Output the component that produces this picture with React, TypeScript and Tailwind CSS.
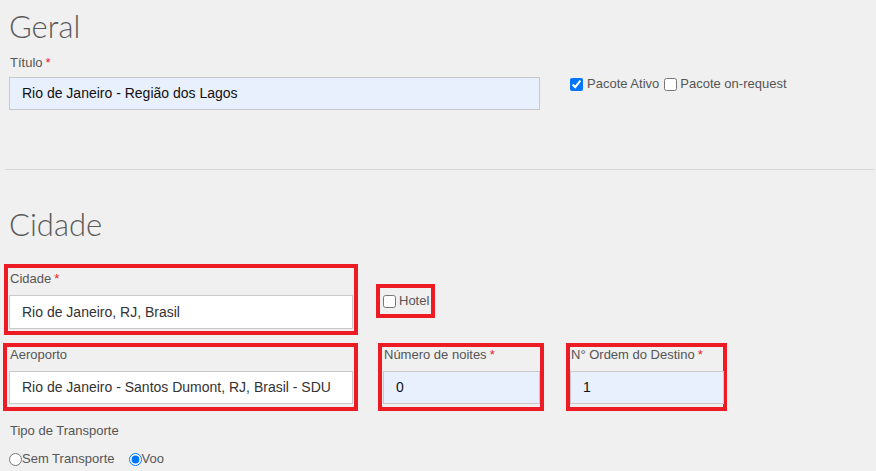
import React from "react";

const Req = () => <span className="text-[#e8212b] ml-[3px]">*</span>;

export default function App() {
  return (
    <div className="min-h-screen w-[876px] bg-[#f0f0f0] font-['Liberation_Sans',Arial,sans-serif] text-[#555] overflow-hidden">
      {/* Geral */}
      <h1 className="pt-[6px] pl-[9px] h-[46px] font-['Lato',sans-serif] font-light text-[31px] leading-[40px] text-[#5a5a5a]">
        Geral
      </h1>
      <div className="mt-[8px] flex items-start">
        <div className="ml-[9px] w-[531px] flex flex-col">
          <label className="pl-[1px] text-[13px] leading-[18px]">
            Título
            <Req />
          </label>
          <div className="mt-[5px] h-[33px] border border-[#c8c8c8] bg-[#e8f0fe] pl-[12px] flex items-center text-[14px] text-[#111]">
            Rio de Janeiro - Região dos Lagos
          </div>
        </div>
        <div className="ml-[30px] mt-[21px] flex items-center text-[13px] leading-[18px]">
          <input type="checkbox" defaultChecked className="m-0 w-[13px] h-[13px] accent-[#0075ff]" />
          <span className="ml-[4px]">Pacote Ativo</span>
          <input type="checkbox" className="m-0 ml-[5px] w-[13px] h-[13px]" />
          <span className="ml-[3px]">Pacote on-request</span>
        </div>
      </div>

      <div className="mt-[59px] ml-[5px] mr-[1px] border-t border-[#d8d8d8]" />

      {/* Cidade */}
      <h2 className="mt-[34px] pl-[9px] h-[40px] font-['Lato',sans-serif] font-light text-[31px] leading-[40px] text-[#5a5a5a]">
        Cidade
      </h2>

      <div className="mt-[20px] flex items-start">
        <div className="ml-[4px] w-[354px] border-4 border-[#ed1c24] pt-[3px] pb-[2px] pl-[1px] pr-[1px] flex flex-col">
          <label className="pl-[1px] text-[13px] leading-[16px]">
            Cidade
            <Req />
          </label>
          <div className="mt-[8px] h-[34px] border border-[#c8c8c8] bg-white pl-[12px] flex items-center text-[14px] text-[#333]">
            Rio de Janeiro, RJ, Brasil
          </div>
        </div>
        <div className="ml-[18px] mt-[20px] w-[59px] h-[34px] border-4 border-[#ed1c24] pl-[3px] flex items-center text-[13px]">
          <input type="checkbox" className="m-0 w-[13px] h-[13px]" />
          <span className="ml-[3px]">Hotel</span>
        </div>
      </div>

      <div className="mt-[8px] flex items-start">
        <div className="ml-[3px] w-[355px] border-4 border-[#ed1c24] pb-[3px] pl-[2px] pr-[1px] flex flex-col">
          <label className="pl-[1px] text-[13px] leading-[16px]">Aeroporto</label>
          <div className="mt-[8px] h-[33px] border border-[#c8c8c8] bg-white pl-[12px] flex items-center text-[14px] text-[#333]">
            Rio de Janeiro - Santos Dumont, RJ, Brasil - SDU
          </div>
        </div>
        <div className="ml-[20px] w-[166px] border-4 border-[#ed1c24] pb-[3px] pl-[1px] flex flex-col">
          <label className="pl-[1px] text-[13px] leading-[16px]">
            Número de noites
            <Req />
          </label>
          <div className="mt-[8px] h-[33px] border border-[#c8c8c8] bg-[#e8f0fe] pl-[12px] flex items-center text-[14px] text-[#111]">
            0
          </div>
        </div>
        <div className="ml-[22px] w-[161px] border-4 border-[#ed1c24] pb-[3px] flex flex-col">
          <label className="pl-[1px] text-[13px] leading-[16px] whitespace-nowrap">
            N° Ordem do Destino
            <Req />
          </label>
          <div className="mt-[8px] h-[33px] w-[154px] border border-[#c8c8c8] bg-[#e8f0fe] pl-[12px] flex items-center text-[14px] text-[#111]">
            1
          </div>
        </div>
      </div>

      <div className="mt-[11px] pl-[10px] text-[13px] leading-[18px]">Tipo de Transporte</div>
      <div className="mt-[10px] pl-[9px] flex items-center text-[13px] leading-[18px]">
        <input type="radio" name="transp" className="m-0 w-[13px] h-[13px]" />
        <span>Sem Transporte</span>
        <input type="radio" name="transp" defaultChecked className="m-0 ml-[14px] w-[13px] h-[13px] accent-[#0075ff]" />
        <span>Voo</span>
      </div>
    </div>
  );
}
